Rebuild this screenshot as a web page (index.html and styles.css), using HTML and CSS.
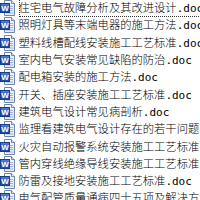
FILE: index.html
```html
<!DOCTYPE html>
<html>
<head>
<meta charset="utf-8">
<link rel="stylesheet" href="styles.css">
</head>
<body>
<svg width="0" height="0" class="defs">
  <defs>
    <linearGradient id="pg" x1="0" y1="0" x2="1" y2="1">
      <stop offset="0" stop-color="#ffffff"/>
      <stop offset="1" stop-color="#dfe6f2"/>
    </linearGradient>
    <linearGradient id="wb" x1="0" y1="0" x2="0" y2="1">
      <stop offset="0" stop-color="#4c7fd6"/>
      <stop offset="1" stop-color="#1c47a6"/>
    </linearGradient>
    <symbol id="doc" viewBox="0 0 16 16">
      <path d="M4.5 0.5 H11.5 L14.5 3.5 V15.5 H4.5 Z" fill="url(#pg)" stroke="#7086ad"/>
      <path d="M11.5 0.5 V3.5 H14.5" fill="#e8eef8" stroke="#7086ad"/>
      <path d="M10 6.5 H13 M10 8.5 H13 M10 10.5 H13 M6 13 H13" stroke="#9db3d8" stroke-width="1"/>
      <rect x="0.5" y="3.5" width="9" height="9" fill="url(#wb)" stroke="#173e8e"/>
      <text x="5" y="11" text-anchor="middle" font-family="Liberation Sans, sans-serif" font-weight="bold" font-size="8" fill="#ffffff">W</text>
    </symbol>
  </defs>
</svg>
<div class="list">
  <div class="row"><svg class="icon"><use href="#doc"/></svg><span class="name focus">住宅电气故障分析及其改进设计<span class="ext">.doc</span></span></div>
  <div class="row"><svg class="icon"><use href="#doc"/></svg><span class="name">照明灯具等末端电器的施工方法<span class="ext">.doc</span></span></div>
  <div class="row"><svg class="icon"><use href="#doc"/></svg><span class="name">塑料线槽配线安装施工工艺标准<span class="ext">.doc</span></span></div>
  <div class="row"><svg class="icon"><use href="#doc"/></svg><span class="name">室内电气安装常见缺陷的防治<span class="ext">.doc</span></span></div>
  <div class="row"><svg class="icon"><use href="#doc"/></svg><span class="name">配电箱安装的施工方法<span class="ext">.doc</span></span></div>
  <div class="row"><svg class="icon"><use href="#doc"/></svg><span class="name">开关、插座安装施工工艺标准<span class="ext">.doc</span></span></div>
  <div class="row"><svg class="icon"><use href="#doc"/></svg><span class="name">建筑电气设计常见病剖析<span class="ext">.doc</span></span></div>
  <div class="row"><svg class="icon"><use href="#doc"/></svg><span class="name">监理看建筑电气设计存在的若干问题<span class="ext">.doc</span></span></div>
  <div class="row"><svg class="icon"><use href="#doc"/></svg><span class="name">火灾自动报警系统安装施工工艺标准<span class="ext">.doc</span></span></div>
  <div class="row"><svg class="icon"><use href="#doc"/></svg><span class="name">管内穿线绝缘导线安装施工工艺标准<span class="ext">.doc</span></span></div>
  <div class="row"><svg class="icon"><use href="#doc"/></svg><span class="name">防雷及接地安装施工工艺标准<span class="ext">.doc</span></span></div>
  <div class="row"><svg class="icon"><use href="#doc"/></svg><span class="name">电气配管质量通病四十五项及解决方法<span class="ext">.doc</span></span></div>
</div>
</body>
</html>
```
FILE: styles.css
```css
html, body {
  margin: 0;
  padding: 0;
  background: #ffffff;
  width: 200px;
  height: 200px;
  overflow: hidden;
}
.defs {
  position: absolute;
  width: 0;
  height: 0;
}
.list {
  display: flex;
  flex-direction: column;
  margin-top: -0.5px;
}
.row {
  display: flex;
  align-items: center;
  height: 17.3px;
  white-space: nowrap;
}
.icon {
  width: 16px;
  height: 16px;
  flex: none;
}
.name {
  margin-left: 2.5px;
  font-family: "Noto Sans CJK SC", sans-serif;
  font-weight: 300;
  font-size: 11.3px;
  line-height: 17px;
  color: #000000;
}
.ext {
  font-family: "DejaVu Sans Mono", monospace;
  font-size: 11px;
}
.focus {
  outline: 1px dotted #333333;
  outline-offset: -1px;
}
```
